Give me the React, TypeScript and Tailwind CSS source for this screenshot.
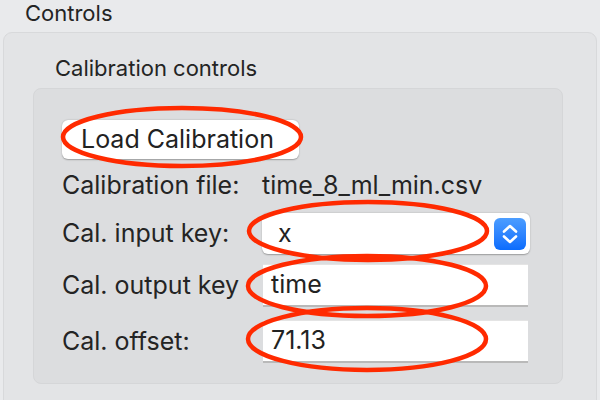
const FONT = "font-['Inter','Noto_Sans',sans-serif]";

/* hand-drawn red rings that lie over the form */
const RINGS = [
  { cx: 182, cy: 137, rx: 119, ry: 29 },
  { cx: 368, cy: 231, rx: 119, ry: 29 },
  { cx: 367, cy: 286, rx: 119, ry: 30 },
  { cx: 367, cy: 339, rx: 119, ry: 31 },
];

function Field({ value }: { value: string }) {
  return (
    <div className="w-[265px] h-[43px] bg-white border-t border-[#e4e4e4] border-b-2 border-b-[#b9b9b9] flex items-center pl-[8px] text-[25px] text-[#222]">
      {value}
    </div>
  );
}

function Stepper() {
  return (
    <div className="w-[32px] h-[32px] rounded-[6px] bg-gradient-to-b from-[#4c9dff] to-[#0a6cfd]">
      <svg width="32" height="32" viewBox="0 0 32 32" fill="none" aria-hidden="true">
        <path d="M10 13.5 16 8l6 5.5M10 18.5l6 5.5 6-5.5" stroke="white" strokeWidth="2.6" strokeLinecap="round" strokeLinejoin="round" />
      </svg>
    </div>
  );
}

export default function App() {
  return (
    <div className={`relative w-[600px] h-[400px] overflow-hidden bg-[#e9eaec] text-[#242424] ${FONT}`}>
      <div className="pl-[25px] text-[22px] leading-[26px]">Controls</div>

      {/* outer group box */}
      <div className="mt-[6px] ml-[3px] mr-[3px] h-[400px] rounded-[9px] border border-[#d8d9db] bg-[#e3e4e6] pt-[22px]">
        <div className="pl-[51px] text-[22px] leading-[26px]">Calibration controls</div>

        {/* inner group box */}
        <div className="mt-[7px] ml-[29px] mr-[33px] h-[296px] rounded-[8px] border border-[#d5d6d8] bg-[#dcdddf] pt-[31px] pl-[28px]">
          <button className="h-[39px] w-[237px] rounded-[6px] bg-white shadow-[0_0.5px_1.5px_rgba(0,0,0,0.3)] text-left pl-[19px] text-[25px] text-[#222]">
            Load Calibration
          </button>

          <div className="flex items-center h-[54px] text-[25px]">
            <span className="w-[200px]">Calibration file:</span>
            <span>time_8_ml_min.csv</span>
          </div>

          <div className="flex items-center h-[41px] text-[25px]">
            <span className="w-[200px] whitespace-nowrap">Cal. input key:</span>
            <div className="w-[268px] h-[41px] rounded-[6px] bg-white shadow-[0_0.5px_1.5px_rgba(0,0,0,0.3)] flex items-center justify-between pl-[16px] pr-[4px]">
              <span className="text-[25px] text-[#222]">x</span>
              <Stepper />
            </div>
          </div>

          <div className="flex items-center h-[43px] mt-[10px] text-[25px]">
            <span className="w-[201px] whitespace-nowrap">Cal. output key</span>
            <Field value="time" />
          </div>

          <div className="flex items-center h-[43px] mt-[13px] text-[25px]">
            <span className="w-[201px]">Cal. offset:</span>
            <Field value="71.13" />
          </div>
        </div>
      </div>

      <svg className="absolute inset-0 pointer-events-none" width="600" height="400" aria-hidden="true">
        {RINGS.map((r, i) => (
          <ellipse key={i} cx={r.cx} cy={r.cy} rx={r.rx} ry={r.ry} fill="none" stroke="#ff2a00" strokeWidth="4.5" />
        ))}
      </svg>
    </div>
  );
}
